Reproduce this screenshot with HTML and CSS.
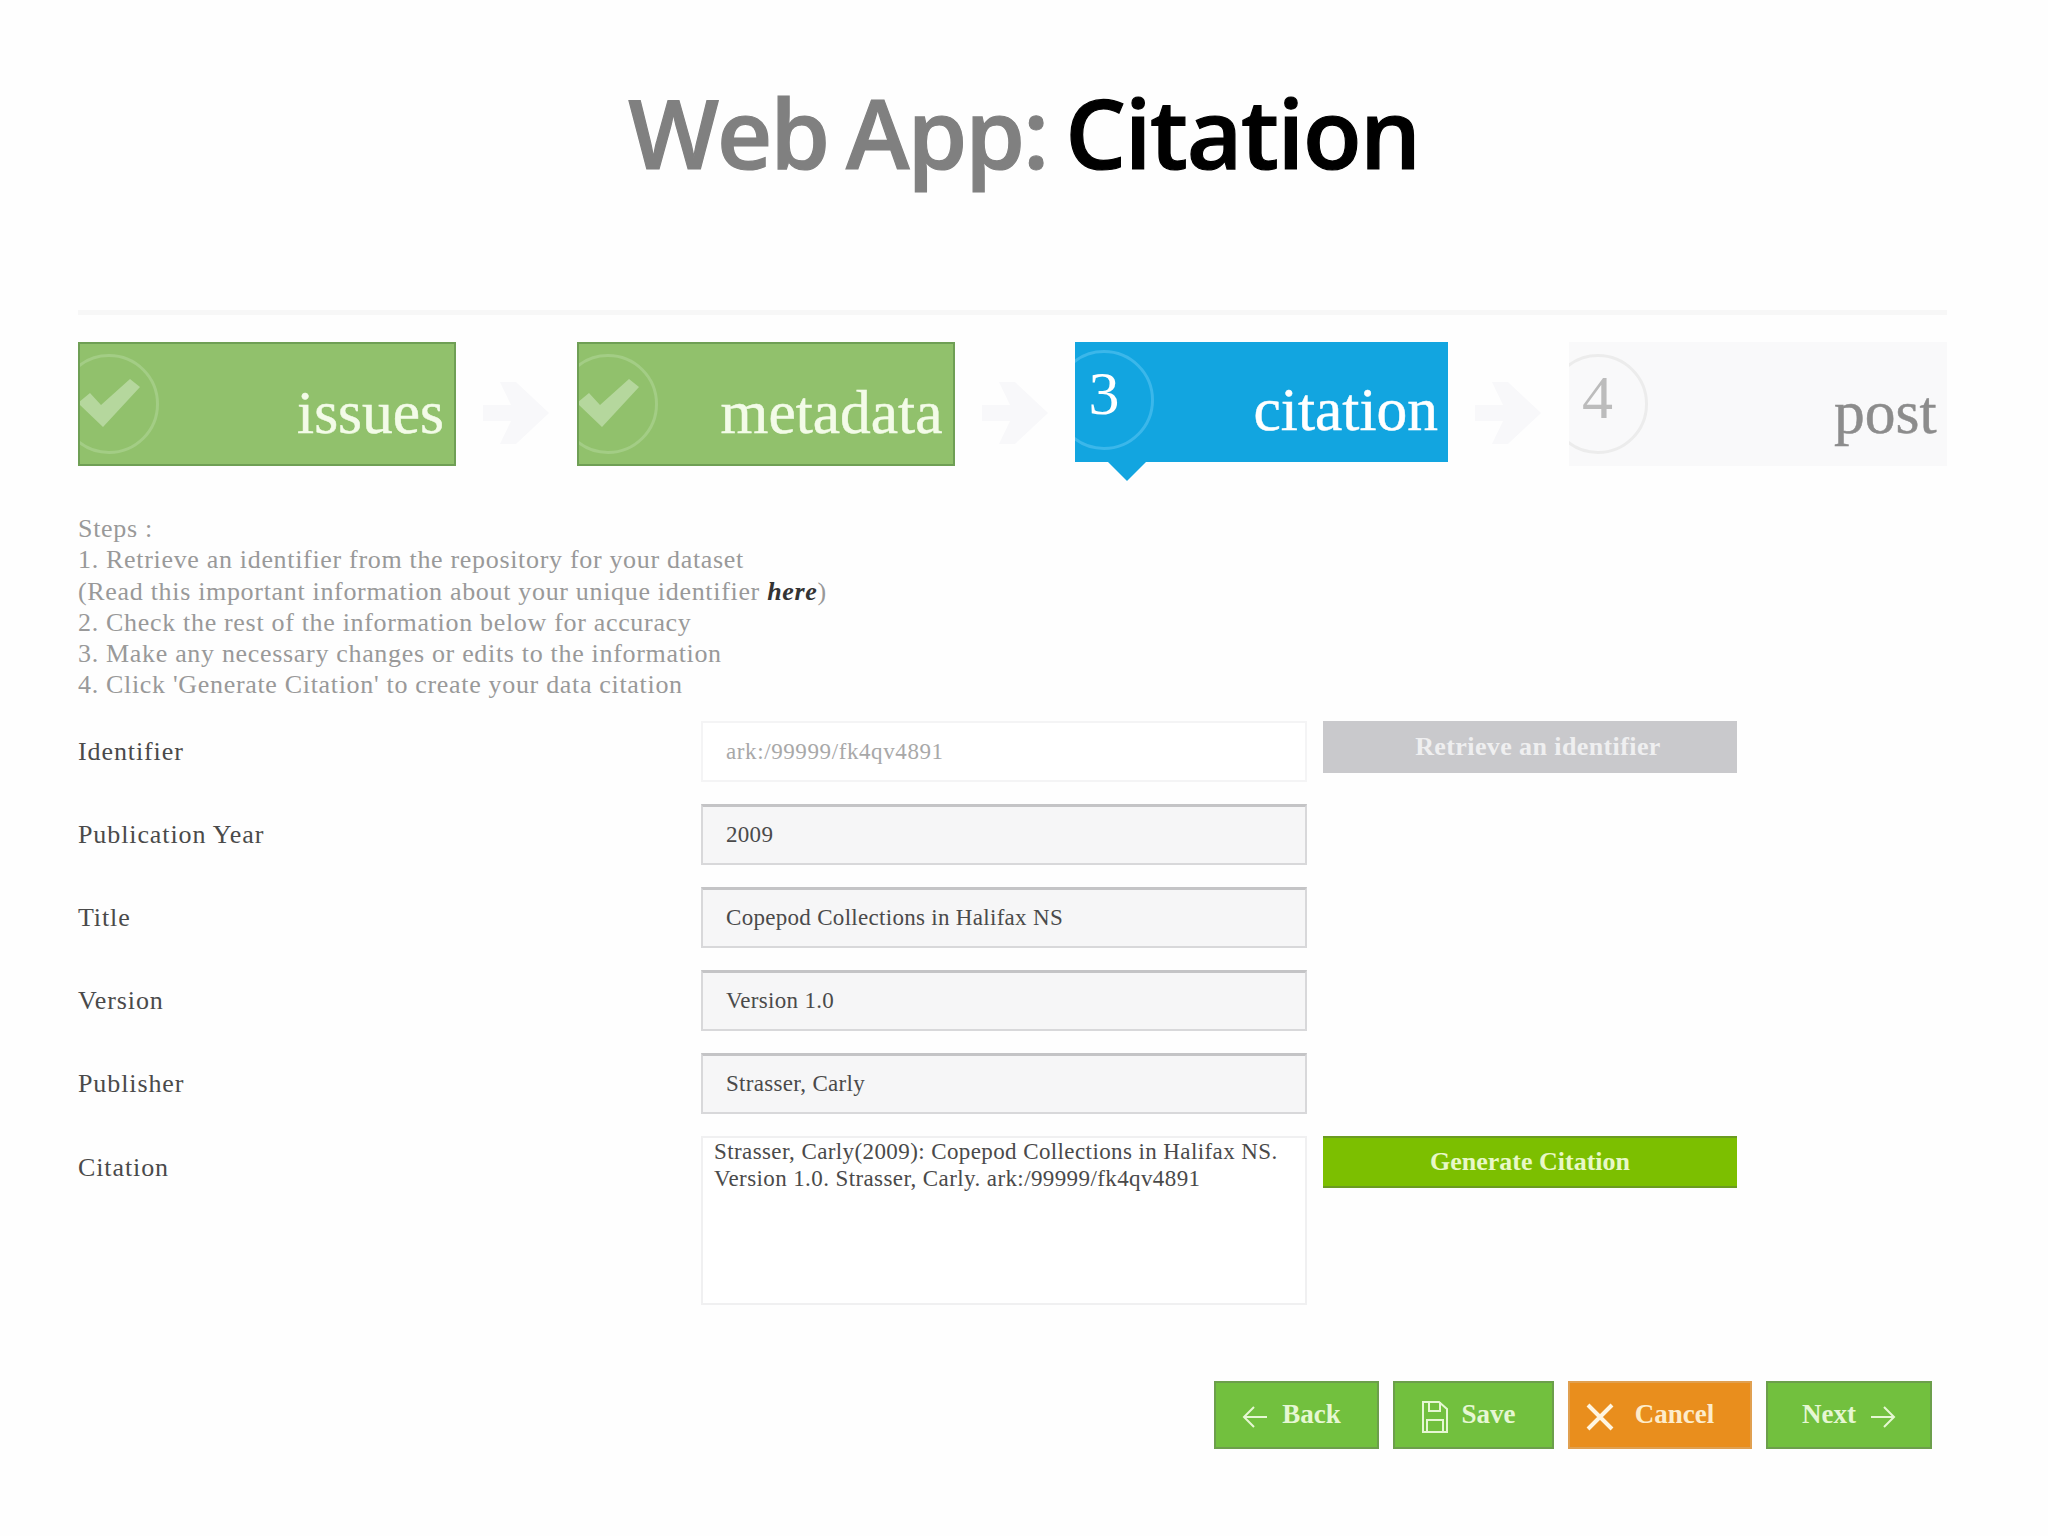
FILE: index.html
```html
<!DOCTYPE html>
<html lang="en">
<head>
    <meta charset="UTF-8">
    <meta name="viewport" content="width=device-width, initial-scale=1.0">
    <title>Web App: Citation</title>
    <link rel="stylesheet" href="styles.css">
</head>
<body>

<h1 class="slide-title">Web App: <span class="slide-title-strong">Citation</span></h1>

<div class="app">
    <div class="divider"></div>

    <!-- Wizard steps -->
    <div class="steps">
        <div class="step step-done">
            <div class="step-body">
                <div class="step-badge">
                    <svg class="step-check" viewBox="0 0 62 50"><path d="M0 24 L12 14 L23 26 L52 0 L62 8 L25 48 Z"/></svg>
                </div>
                <span class="step-name">issues</span>
            </div>
        </div>
        <div class="step-arrow">
            <svg viewBox="0 0 66 62"><path d="M0 23 H28 L17 0 H33 L66 31 L33 62 H17 L28 39 H0 Z"/></svg>
        </div>
        <div class="step step-done">
            <div class="step-body">
                <div class="step-badge">
                    <svg class="step-check" viewBox="0 0 62 50"><path d="M0 24 L12 14 L23 26 L52 0 L62 8 L25 48 Z"/></svg>
                </div>
                <span class="step-name">metadata</span>
            </div>
        </div>
        <div class="step-arrow">
            <svg viewBox="0 0 66 62"><path d="M0 23 H28 L17 0 H33 L66 31 L33 62 H17 L28 39 H0 Z"/></svg>
        </div>
        <div class="step step-current">
            <div class="step-body">
                <div class="step-badge"><span class="step-number">3</span></div>
                <span class="step-name">citation</span>
            </div>
        </div>
        <div class="step-arrow">
            <svg viewBox="0 0 66 62"><path d="M0 23 H28 L17 0 H33 L66 31 L33 62 H17 L28 39 H0 Z"/></svg>
        </div>
        <div class="step step-todo">
            <div class="step-body">
                <div class="step-badge"><span class="step-number">4</span></div>
                <span class="step-name">post</span>
            </div>
        </div>
    </div>

    <div class="instructions">
        Steps :<br>
        1. Retrieve an identifier from the repository for your dataset<br>
        (Read this important information about your unique identifier <a class="here" href="#">here</a>)<br>
        2. Check the rest of the information below for accuracy<br>
        3. Make any necessary changes or edits to the information<br>
        4. Click 'Generate Citation' to create your data citation
    </div>

    <div class="form">
        <div class="form-label">Identifier</div>
        <div class="field field-readonly">ark:/99999/fk4qv4891</div>
        <button class="form-button button-disabled">Retrieve an identifier</button>

        <div class="form-label">Publication Year</div>
        <div class="field">2009</div>
        <div></div>

        <div class="form-label">Title</div>
        <div class="field">Copepod Collections in Halifax NS</div>
        <div></div>

        <div class="form-label">Version</div>
        <div class="field">Version 1.0</div>
        <div></div>

        <div class="form-label">Publisher</div>
        <div class="field">Strasser, Carly</div>
        <div></div>

        <div class="form-label form-label-top">Citation</div>
        <div class="citation-box">Strasser, Carly(2009): Copepod Collections in Halifax NS. Version 1.0. Strasser, Carly. ark:/99999/fk4qv4891</div>
        <button class="form-button button-generate">Generate Citation</button>
    </div>

    <div class="actions">
        <a class="action action-back" href="#">
            <svg class="action-icon" viewBox="0 0 26 24"><path d="M25 12 H2 M12 2 L2 12 L12 22"/></svg>
            Back
        </a>
        <a class="action action-save" href="#">
            <svg class="action-icon icon-save" viewBox="0 0 26 32"><path d="M1 1 H17 L25 8 V31 H1 Z M7 1 V10 H18 V1 M5 31 V19 H21 V31"/></svg>
            Save
        </a>
        <a class="action action-cancel" href="#">
            <svg class="action-icon icon-cancel" viewBox="0 0 28 28"><path d="M2 2 L26 26 M26 2 L2 26"/></svg>
            Cancel
        </a>
        <a class="action action-next" href="#">
            Next
            <svg class="action-icon" viewBox="0 0 26 24"><path d="M1 12 H24 M14 2 L24 12 L14 22"/></svg>
        </a>
    </div>
</div>

</body>
</html>
```

FILE: styles.css
```css
body {
    font-family: 'Liberation Serif', serif;
    margin: 0;
    padding: 0;
    background-color: #fefefe;
    color: #555;
}

.slide-title {
    margin: 0;
    padding-top: 74px;
    height: 232px;
    box-sizing: border-box;
    font-family: 'Open Sans', sans-serif;
    font-size: 96px;
    font-weight: 600;
    line-height: 116px;
    letter-spacing: -2px;
    word-spacing: -5px;
    -webkit-text-stroke: 1.2px currentColor;
    text-align: center;
    color: #808080;
}

.slide-title-strong {
    letter-spacing: -1.4px;
    color: #000;
}

.app {
    padding: 78px 101px 0 78px;
}

.divider {
    height: 5px;
    background-color: #f7f7f7;
    margin-bottom: 27px;
}

/* Wizard steps */
.steps {
    display: flex;
    align-items: flex-start;
}

.step {
    position: relative;
    flex: none;
    box-sizing: border-box;
    width: 378px;
    height: 124px;
}

.step-body {
    display: flex;
    align-items: center;
    justify-content: space-between;
    height: 100%;
    padding-right: 10px;
    box-sizing: border-box;
    overflow: hidden;
}

.step-done {
    background-color: #91c16c;
    border: 2px solid #6f9f55;
    color: #f3fbe8;
}

.step-current {
    width: 373px;
    height: 120px;
    background-color: #12a5e0;
    color: #fff;
}

/* little pointer under the current step */
.step-current::after {
    content: '';
    position: absolute;
    left: 33px;
    bottom: -19px;
    border-left: 19px solid transparent;
    border-right: 19px solid transparent;
    border-top: 19px solid #12a5e0;
}

.step-todo {
    background-color: #f9f9fa;
    color: #8c8c8c;
}

.step-arrow {
    display: flex;
    justify-content: center;
    flex: none;
    width: 120.5px;
    padding-top: 40px;
}

.step-arrow svg {
    width: 66px;
    height: 62px;
    fill: #f8f8fa;
}

.step-badge {
    display: flex;
    align-items: center;
    justify-content: center;
    flex: none;
    box-sizing: border-box;
    width: 100px;
    height: 100px;
    margin-left: -21px;
    border: 3px solid #a3cd85;
    border-radius: 50%;
}

.step-current .step-badge {
    border-color: #3bb7ea;
    margin-bottom: 4px;
}

.step-todo .step-badge {
    border-color: #ececec;
}

.step-check {
    flex: none;
    width: 62px;
    height: 50px;
    fill: #b5d79d;
}

.step-number {
    font-size: 62px;
    line-height: 1;
    margin-bottom: 14px;
}

.step-todo .step-number {
    color: #bcbcbc;
}

.step-name {
    font-size: 61.5px;
    line-height: 1;
    padding-top: 18px;
    -webkit-text-stroke: 0.5px currentColor;
}

.step-current .step-name {
    padding-top: 16px;
}

/* Instruction text */
.instructions {
    margin-top: 47px;
    font-size: 26px;
    line-height: 31.3px;
    letter-spacing: 0.68px;
    color: #999;
}

.here {
    color: #333;
    font-style: italic;
    font-weight: bold;
    text-decoration: none;
}

/* Citation form */
.form {
    display: grid;
    grid-template-columns: 623px 606px 430px;
    grid-template-rows: repeat(5, 61px) 169px;
    row-gap: 22px;
    margin-top: 20px;
}

.form-label {
    display: flex;
    align-items: center;
    padding-top: 2px;
    font-size: 26px;
    letter-spacing: 0.9px;
    color: #4a4a4a;
}

.form-label-top {
    align-self: start;
    height: 61px;
}

.field {
    display: flex;
    align-items: center;
    box-sizing: border-box;
    padding-left: 23px;
    padding-top: 1px;
    background-color: #f6f6f7;
    border: 2px solid #d8d8da;
    border-top: 3px solid #c4c4c6;
    font-size: 23px;
    letter-spacing: 0.3px;
    color: #4a4a4a;
}

.field-readonly {
    background-color: #fff;
    border: 2px solid #f4f4f5;
    letter-spacing: 0.6px;
    color: #a8a8a8;
}

.citation-box {
    box-sizing: border-box;
    padding: 0 11px;
    background-color: #fff;
    border: 2px solid #f0f0f1;
    font-size: 23px;
    line-height: 27px;
    letter-spacing: 0.4px;
    color: #4a4a4a;
}

.form-button {
    align-self: start;
    height: 52px;
    margin-left: 16px;
    padding: 0;
    border: none;
    font-family: inherit;
    font-size: 26px;
    font-weight: bold;
    cursor: pointer;
}

.button-disabled {
    padding-left: 16px;
    letter-spacing: 0.4px;
    background-color: #c9c9cc;
    color: #efeff0;
}

.button-generate {
    background-color: #7cbf00;
    border-top: 2px solid #6b9b20;
    border-bottom: 2px solid #6b9b20;
    color: #e8f8c8;
}

/* Bottom buttons */
.actions {
    display: flex;
    justify-content: flex-end;
    gap: 14px;
    margin-top: 76px;
    margin-right: 15px;
}

.action {
    display: flex;
    align-items: center;
    justify-content: center;
    gap: 14px;
    box-sizing: border-box;
    height: 68px;
    font-size: 27px;
    font-weight: bold;
    text-decoration: none;
    color: #e6f7d3;
    background-color: #72c03e;
    border: 2px solid #6c9f4b;
}

.action-back { width: 165px; padding-right: 10px; }
.action-save { width: 161px; padding-right: 10px; }
.action-next { width: 166px; }

.action-cancel {
    width: 184px;
    gap: 21px;
    padding-right: 20px;
    background-color: #e98e1d;
    border-color: #e0a050;
    color: #fdeccb;
}

.action-icon {
    flex: none;
    width: 26px;
    height: 24px;
    margin-top: 4px;
    fill: none;
    stroke: currentColor;
    stroke-width: 2;
}

.icon-save {
    height: 32px;
}

.icon-cancel {
    width: 28px;
    height: 28px;
    stroke: #fff5e0;
    stroke-width: 4;
}
```
